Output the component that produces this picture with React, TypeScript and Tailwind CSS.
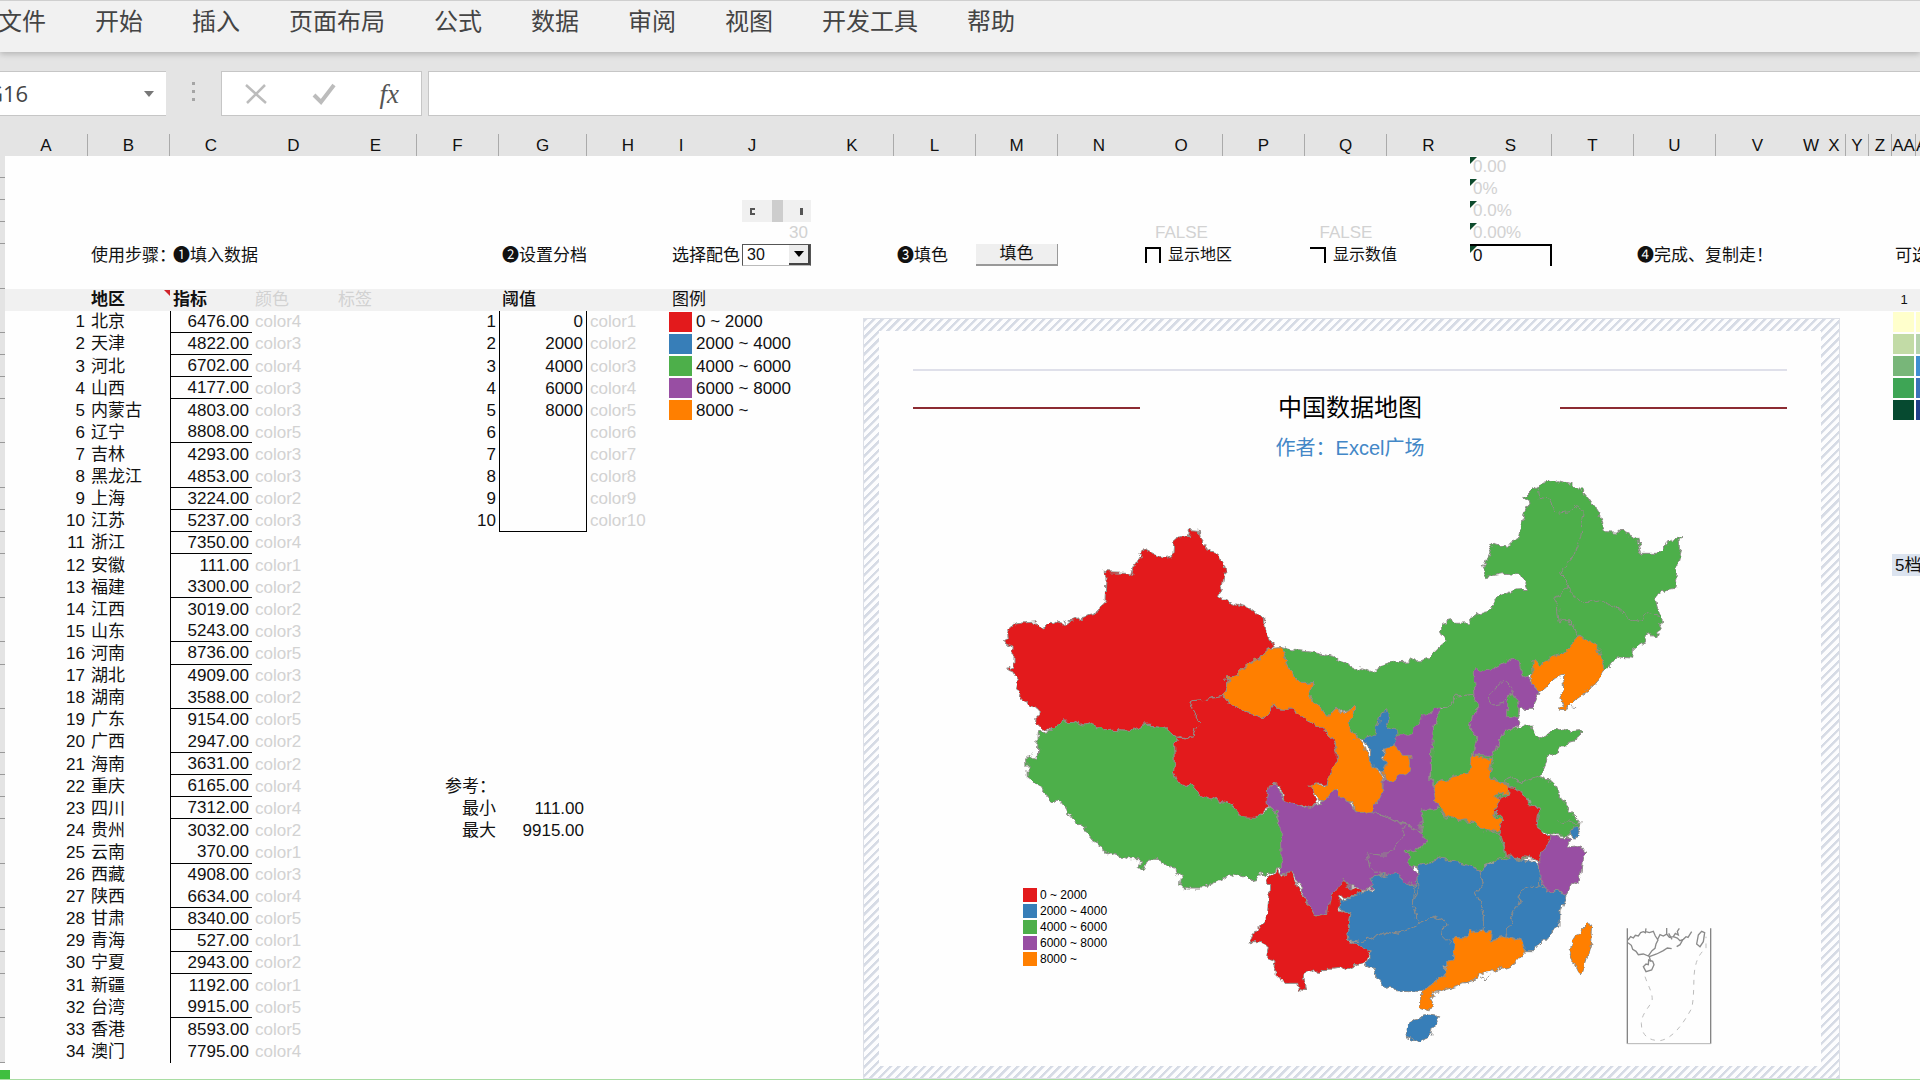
import type { ReactNode } from 'react'
import { clsx } from 'clsx'

type Region = [name: string, value: string, color: string]
type Cells = Record<string, ReactNode>

const MENU = ['文件', '开始', '插入', '页面布局', '公式', '数据', '审阅', '视图', '开发工具', '帮助']

// column letter, width, separator on the right of the header
const COLUMNS: [string, string, boolean][] = [
  ['A', 'w-[83px]', true],
  ['B', 'w-[82px]', true],
  ['C', 'w-[82px]', false],
  ['D', 'w-[83px]', false],
  ['E', 'w-[82px]', true],
  ['F', 'w-[82px]', true],
  ['G', 'w-[88px]', true],
  ['H', 'w-[82px]', false],
  ['I', 'w-[24px]', false],
  ['J', 'w-[118px]', false],
  ['K', 'w-[83px]', true],
  ['L', 'w-[82px]', true],
  ['M', 'w-[82px]', true],
  ['N', 'w-[82px]', false],
  ['O', 'w-[83px]', true],
  ['P', 'w-[82px]', true],
  ['Q', 'w-[82px]', true],
  ['R', 'w-[83px]', false],
  ['S', 'w-[82px]', true],
  ['T', 'w-[82px]', true],
  ['U', 'w-[82px]', true],
  ['V', 'w-[83px]', false],
  ['W', 'w-[24px]', false],
  ['X', 'w-[23px]', true],
  ['Y', 'w-[23px]', true],
  ['Z', 'w-[23px]', true],
  ['AA', 'w-[24px]', true],
  ['AB', '', false],
]

const REGIONS: Region[] = [
  ['北京', '6476.00', 'color4'],
  ['天津', '4822.00', 'color3'],
  ['河北', '6702.00', 'color4'],
  ['山西', '4177.00', 'color3'],
  ['内蒙古', '4803.00', 'color3'],
  ['辽宁', '8808.00', 'color5'],
  ['吉林', '4293.00', 'color3'],
  ['黑龙江', '4853.00', 'color3'],
  ['上海', '3224.00', 'color2'],
  ['江苏', '5237.00', 'color3'],
  ['浙江', '7350.00', 'color4'],
  ['安徽', '111.00', 'color1'],
  ['福建', '3300.00', 'color2'],
  ['江西', '3019.00', 'color2'],
  ['山东', '5243.00', 'color3'],
  ['河南', '8736.00', 'color5'],
  ['湖北', '4909.00', 'color3'],
  ['湖南', '3588.00', 'color2'],
  ['广东', '9154.00', 'color5'],
  ['广西', '2947.00', 'color2'],
  ['海南', '3631.00', 'color2'],
  ['重庆', '6165.00', 'color4'],
  ['四川', '7312.00', 'color4'],
  ['贵州', '3032.00', 'color2'],
  ['云南', '370.00', 'color1'],
  ['西藏', '4908.00', 'color3'],
  ['陕西', '6634.00', 'color4'],
  ['甘肃', '8340.00', 'color5'],
  ['青海', '527.00', 'color1'],
  ['宁夏', '2943.00', 'color2'],
  ['新疆', '1192.00', 'color1'],
  ['台湾', '9915.00', 'color5'],
  ['香港', '8593.00', 'color5'],
  ['澳门', '7795.00', 'color4'],
]

const THRESHOLDS = ['0', '2000', '4000', '6000', '8000']

const LEGEND = [
  { label: '0 ~ 2000', bg: 'bg-[#e31a1c]' },
  { label: '2000 ~ 4000', bg: 'bg-[#377eb8]' },
  { label: '4000 ~ 6000', bg: 'bg-[#4daf4a]' },
  { label: '6000 ~ 8000', bg: 'bg-[#984ea3]' },
  { label: '8000 ~', bg: 'bg-[#ff7f00]' },
]

const PALETTE_1 = ['bg-[#ffffcc]', 'bg-[#c2dba6]', 'bg-[#78b679]', 'bg-[#3ea555]', 'bg-[#064a30]']
const PALETTE_2 = ['bg-[#ffffcc]', 'bg-[#b5d3ae]', 'bg-[#3f8fd2]', 'bg-[#3b73b9]', 'bg-[#233f8c]']

// data rows drawn without a line below them
const UNRULED = [5, 7, 12, 14, 17, 19, 24, 26, 31, 33, 34]

const RED = '#e31a1c'
const BLUE = '#377eb8'
const GREEN = '#4daf4a'
const PURPLE = '#984ea3'
const ORANGE = '#ff7f00'

// plain areas below the provinces, so no white shows between two neighbours
const UNDERLAY = [
  { fill: GREEN, points: '1310,1000 1470,830 1560,850 1600,970 1690,1070 1685,1190 1500,1215 1320,1200' },
  { fill: PURPLE, points: '910,1100 1060,1010 1130,1050 1200,960 1340,1040 1300,1240 1180,1260 1000,1330' },
  { fill: BLUE, points: '1300,1240 1500,1220 1670,1230 1720,1300 1620,1425 1480,1405 1200,1480 1120,1360' },
]

const PROVINCES: { name: string; fill: string; points: string }[] = [
  {
    name: '内蒙古 黑龙江 吉林',
    fill: GREEN,
    points:
      '905,560 950,572 1010,578 1060,590 1080,608 1120,622 1165,635 1210,618 1250,605 1320,602 1350,592 1370,570 1400,545 1385,520 1385,490 1415,482 1430,490 1465,488 1485,462 1520,455 1540,430 1560,408 1605,390 1648,388 1640,365 1615,345 1575,340 1520,350 1508,335 1520,300 1540,250 1580,262 1595,245 1615,235 1620,200 1635,160 1650,130 1648,118 1628,112 1655,85 1690,70 1730,62 1770,70 1800,85 1825,115 1855,160 1875,215 1930,218 1970,238 1982,280 2030,280 2055,255 2108,225 2100,240 2105,262 2095,300 2088,388 2045,395 2025,415 2035,450 2045,485 2035,515 2030,528 2005,515 1995,545 1960,570 1958,595 1910,590 1880,630 1820,640 1700,640 1655,645 1560,670 1485,700 1430,705 1405,740 1370,745 1330,780 1295,825 1252,830 1200,840 1150,840 1135,835 1105,815 1100,790 1125,745 1060,752 1050,765 1035,765 1020,740 985,705 990,690 995,662 965,665 935,645 918,612',
  },
  {
    name: '新疆',
    fill: RED,
    points:
      '372,338 440,340 455,346 462,320 495,268 515,278 545,294 578,288 582,240 600,230 628,230 632,206 658,208 660,232 672,250 690,276 716,284 728,315 735,340 730,375 718,400 726,414 760,430 800,440 830,462 856,486 862,520 880,556 862,562 860,592 825,600 800,618 775,642 745,645 738,680 735,700 725,710 680,718 640,722 635,735 645,765 662,790 645,808 638,835 600,830 590,832 560,805 520,800 490,798 455,812 400,808 350,810 345,788 310,795 280,782 250,780 235,790 220,810 185,805 170,790 172,745 150,735 118,706 108,690 115,660 98,632 80,626 102,618 102,560 78,552 70,542 82,535 80,515 105,492 140,488 168,486 172,500 195,504 215,484 245,492 270,482 345,466 350,448 375,428 378,350',
  },
  {
    name: '西藏',
    fill: GREEN,
    points:
      '175,815 220,810 235,790 250,780 280,782 310,795 345,788 350,810 400,808 455,812 490,798 520,800 560,805 590,832 598,842 584,855 586,900 580,930 590,965 610,972 630,974 655,1000 700,1020 745,1028 775,1050 780,1070 825,1070 850,1060 862,1040 885,1052 895,1090 905,1110 905,1225 890,1228 860,1250 838,1244 830,1262 815,1265 800,1250 760,1238 725,1258 700,1270 675,1284 625,1284 602,1276 604,1250 590,1240 588,1222 560,1216 535,1202 510,1200 495,1210 485,1232 478,1220 482,1196 440,1196 400,1182 370,1172 365,1158 340,1145 315,1115 310,1092 290,1090 265,1060 250,1038 235,1020 215,1026 180,985 160,964 142,956 140,890 155,882 158,890 172,892',
  },
  {
    name: '青海',
    fill: RED,
    points:
      '640,722 680,718 725,710 745,722 770,740 800,760 850,772 870,762 880,735 905,750 940,750 985,782 1020,800 1060,835 1072,880 1072,910 1050,955 1035,975 1000,975 1002,1000 1012,1025 985,1050 965,1040 930,1030 912,1025 905,980 885,970 865,985 860,1035 845,1060 825,1072 782,1070 770,1045 745,1028 700,1020 655,1000 630,974 610,972 590,965 580,930 586,900 584,855 598,842 590,832 638,835 645,808 662,790 645,765 635,735',
  },
  {
    name: '甘肃',
    fill: ORANGE,
    points:
      '862,562 905,560 915,590 918,612 935,645 965,665 995,662 990,690 985,705 1020,740 1035,765 1050,765 1060,752 1090,755 1120,745 1128,750 1120,775 1105,792 1105,815 1135,835 1160,865 1170,910 1205,945 1208,1000 1190,1035 1175,1060 1125,1060 1118,1028 1080,1010 1070,990 1045,1010 1040,1028 1020,1020 995,985 990,975 1035,980 1042,955 1072,910 1072,880 1060,835 1020,800 985,782 940,750 905,750 880,735 870,762 850,772 800,760 770,740 745,722 725,710 735,700 738,680 745,645 775,642 800,618 825,600 860,592',
  },
  {
    name: '陕西',
    fill: PURPLE,
    points:
      '1370,745 1380,748 1365,800 1362,850 1355,880 1352,975 1370,1010 1372,1045 1325,1048 1335,1065 1320,1090 1320,1115 1280,1095 1220,1068 1175,1060 1190,1035 1208,1000 1210,955 1205,935 1240,858 1240,830 1252,825 1295,825 1305,800 1330,770',
  },
  {
    name: '甘肃东',
    fill: ORANGE,
    points:
      '1215,865 1230,858 1285,885 1290,910 1280,945 1255,945 1250,960 1230,962 1210,955 1208,935 1225,910 1210,885',
  },
  {
    name: '宁夏',
    fill: BLUE,
    points:
      '1150,840 1185,820 1195,790 1200,760 1225,752 1228,765 1215,800 1250,815 1252,830 1240,860 1210,868 1208,890 1225,908 1210,935 1195,932 1170,910 1172,870',
  },
  {
    name: '四川 重庆',
    fill: PURPLE,
    points:
      '865,975 895,972 908,1020 935,1030 980,1050 1010,1030 1040,1020 1060,985 1080,1005 1105,1018 1125,1055 1160,1060 1180,1058 1240,1080 1300,1105 1325,1115 1345,1140 1320,1165 1275,1175 1295,1215 1310,1245 1305,1280 1275,1260 1250,1240 1220,1245 1170,1255 1180,1280 1150,1295 1110,1280 1090,1255 1060,1310 1050,1355 1005,1368 985,1330 960,1275 935,1240 905,1245 900,1100 885,1055 858,1030',
  },
  {
    name: '辽宁',
    fill: ORANGE,
    points:
      '1655,600 1675,620 1700,600 1770,565 1795,540 1802,525 1825,540 1855,570 1880,630 1840,680 1815,700 1785,720 1760,745 1738,754 1740,740 1752,738 1740,712 1755,690 1750,650 1725,660 1705,680 1682,698 1648,665 1660,640',
  },
  {
    name: '山西',
    fill: GREEN,
    points:
      '1380,748 1405,740 1430,705 1485,700 1482,730 1495,750 1475,770 1470,795 1488,830 1472,900 1465,935 1420,950 1355,975 1355,880 1362,820 1370,780',
  },
  {
    name: '河北',
    fill: PURPLE,
    points:
      '1490,620 1505,640 1530,630 1580,600 1600,592 1620,610 1625,640 1648,648 1648,665 1680,698 1660,745 1625,745 1615,755 1610,775 1620,795 1585,812 1560,835 1535,890 1480,885 1488,830 1470,795 1475,770 1495,750 1482,730 1485,700 1480,655 1480,640',
  },
  { name: '天津', fill: GREEN, points: '1595,705 1610,720 1615,740 1610,772 1580,768 1580,735' },
  {
    name: '山东',
    fill: GREEN,
    points:
      '1560,835 1585,812 1620,800 1655,795 1665,820 1680,838 1700,825 1725,802 1765,815 1798,812 1792,840 1760,845 1735,870 1710,885 1685,945 1660,965 1630,970 1600,955 1570,968 1525,945 1540,905 1535,890',
  },
  {
    name: '江苏',
    fill: GREEN,
    points:
      '1570,968 1600,955 1630,970 1685,950 1725,970 1745,1020 1770,1055 1798,1080 1795,1100 1775,1110 1765,1130 1710,1125 1670,1100 1675,1065 1685,1045 1660,1040 1645,1015 1600,985',
  },
  {
    name: '河南',
    fill: ORANGE,
    points:
      '1355,975 1420,950 1465,935 1478,885 1535,900 1525,950 1570,970 1590,985 1580,1000 1550,1005 1555,1025 1540,1045 1550,1075 1565,1080 1560,1105 1530,1118 1485,1100 1480,1080 1420,1080 1390,1060 1370,1030',
  },
  {
    name: '湖北',
    fill: GREEN,
    points:
      '1325,1050 1375,1045 1395,1070 1440,1082 1485,1085 1495,1105 1540,1118 1555,1115 1565,1150 1575,1185 1550,1200 1500,1230 1460,1215 1420,1205 1375,1195 1340,1210 1315,1220 1295,1215 1275,1175 1320,1165 1345,1140 1320,1115 1330,1080',
  },
  {
    name: '安徽',
    fill: RED,
    points:
      '1580,980 1600,985 1625,1000 1645,1015 1650,1040 1685,1045 1672,1065 1668,1095 1685,1120 1712,1130 1695,1175 1680,1205 1650,1195 1580,1190 1565,1130 1552,1120 1568,1080 1540,1055 1555,1015 1585,1000',
  },
  {
    name: '浙江',
    fill: PURPLE,
    points:
      '1710,1130 1750,1135 1775,1135 1760,1162 1790,1158 1820,1170 1810,1200 1805,1250 1775,1270 1760,1300 1700,1290 1680,1250 1665,1210 1685,1190',
  },
  { name: '上海', fill: BLUE, points: '1780,1100 1792,1105 1802,1122 1780,1132 1770,1115' },
  {
    name: '云南',
    fill: RED,
    points:
      '895,1228 905,1250 930,1235 950,1270 985,1330 1005,1368 1045,1358 1055,1310 1090,1255 1110,1285 1145,1295 1130,1310 1080,1308 1075,1350 1110,1355 1105,1400 1110,1445 1170,1475 1160,1500 1110,1525 1040,1532 1000,1530 970,1545 980,1590 955,1585 950,1570 915,1570 880,1535 885,1500 860,1490 865,1460 850,1445 810,1445 825,1410 865,1365 872,1280 858,1265 870,1250',
  },
  {
    name: '贵州',
    fill: BLUE,
    points:
      '1075,1320 1120,1310 1180,1285 1170,1255 1220,1245 1250,1238 1275,1260 1305,1285 1300,1330 1315,1390 1260,1420 1220,1410 1190,1430 1140,1445 1110,1440 1105,1400 1110,1355 1075,1345',
  },
  {
    name: '广西',
    fill: BLUE,
    points:
      '1110,1445 1140,1445 1190,1430 1220,1410 1260,1420 1315,1390 1380,1370 1398,1390 1390,1430 1425,1430 1420,1490 1395,1520 1400,1540 1360,1570 1325,1595 1260,1590 1220,1585 1190,1555 1190,1530 1150,1520 1170,1490 1170,1475',
  },
  {
    name: '湖南',
    fill: BLUE,
    points:
      '1315,1220 1375,1195 1420,1205 1460,1215 1500,1230 1510,1265 1488,1305 1510,1360 1510,1410 1475,1412 1460,1430 1425,1430 1410,1450 1390,1430 1398,1390 1380,1370 1315,1390 1300,1330 1315,1290 1310,1245',
  },
  {
    name: '江西',
    fill: BLUE,
    points:
      '1500,1230 1550,1205 1600,1192 1660,1205 1678,1245 1675,1270 1630,1290 1610,1340 1590,1380 1580,1430 1530,1440 1510,1410 1510,1360 1488,1305 1510,1265',
  },
  {
    name: '福建',
    fill: BLUE,
    points:
      '1675,1270 1700,1290 1760,1300 1740,1350 1740,1400 1700,1430 1660,1475 1635,1475 1625,1440 1580,1430 1590,1380 1610,1340 1630,1290',
  },
  {
    name: '广东',
    fill: ORANGE,
    points:
      '1425,1430 1460,1430 1475,1410 1535,1415 1530,1440 1580,1430 1625,1440 1635,1480 1610,1510 1540,1535 1510,1540 1495,1535 1485,1560 1400,1585 1360,1600 1350,1615 1360,1645 1345,1652 1325,1645 1325,1595 1360,1570 1400,1540 1400,1500 1420,1490',
  },
  { name: '海南', fill: BLUE, points: '1275,1700 1305,1675 1350,1665 1382,1670 1360,1700 1355,1725 1320,1748 1280,1735' },
  { name: '台湾', fill: ORANGE, points: '1805,1405 1820,1390 1838,1395 1835,1440 1820,1500 1805,1545 1790,1530 1770,1490 1780,1445' },
]

const INNER_BORDERS = [
  '1675,80 1680,115 1710,122 1730,160 1770,155 1790,138 1815,160 1802,230 1780,290 1740,345 1765,370 1750,400 1720,415 1735,440 1740,485 1770,485 1795,528',
  '1765,375 1780,410 1820,425 1860,420 1900,440 1930,465 1965,485 2000,460 2035,470',
  '1530,705 1555,675 1570,662 1600,690 1595,710 1570,730 1540,735 1530,705',
  '1240,1080 1280,1100 1260,1140 1225,1185 1200,1185 1160,1180 1170,1220 1200,1250',
  '1740,1090 1765,1082 1790,1092 1797,1110',
  '1500,1552 1515,1548 1522,1560 1530,1548',
  '1775,738 1785,740',
]

function ChinaMap() {
  return (
    <svg viewBox="0 0 2220 1800" className="h-[600px] w-[740px]" role="img" aria-label="中国数据地图">
      <defs>
        <filter id="coast" x="0" y="0" width="100%" height="100%" colorInterpolationFilters="sRGB">
          <feTurbulence type="fractalNoise" baseFrequency="0.035" numOctaves={3} seed={4} />
          <feDisplacementMap in="SourceGraphic" scale={28} xChannelSelector="R" yChannelSelector="G" />
        </filter>
      </defs>
      <g filter="url(#coast)">
        {UNDERLAY.map((area) => (
          <polygon key={area.points} points={area.points} fill={area.fill} />
        ))}
        <g stroke="#8f8c88" strokeWidth={3} strokeLinejoin="round">
          {PROVINCES.map((p) => (
            <polygon key={p.name} points={p.points} fill={p.fill} />
          ))}
          {INNER_BORDERS.map((points) => (
            <polyline key={points} points={points} fill="none" />
          ))}
        </g>
      </g>
      {/* 南海诸岛 */}
      <g fill="none" stroke="#8a8a8a" strokeWidth={4}>
        <path d="M1942 1405V1751M2192 1405V1751" stroke="#858585" />
        <path d="M1942 1751H2192" stroke="#b5b5b5" strokeWidth={3} />
        <path d="M1944 1440L1952 1430 1960 1434 1966 1426 1975 1428 1982 1418 1990 1415 1996 1418 1998 1405M1998 1415L2008 1418 2020 1414 2026 1428 2034 1440 2028 1452 2025 1465 2016 1472 2005 1488 1990 1482 1975 1484 1968 1474 1958 1468 1954 1456 1944 1448M2032 1440L2040 1424 2050 1428 2060 1422 2060 1404M2060 1422L2068 1432 2080 1430 2086 1420 2095 1425 2092 1414 2098 1405M2066 1420L2076 1438M2080 1430L2092 1434 2100 1442 2110 1438 2118 1430 2124 1432 2135 1415M2108 1440L2100 1454 2090 1460M2075 1466L2062 1464 2050 1472 2030 1482 2008 1490 2012 1505" />
        <path d="M1990 1520L1998 1512 2005 1514 2006 1500 2018 1504 2022 1514 2015 1530 1998 1535Z" />
        <path d="M2155 1425L2165 1414 2174 1418 2170 1445 2160 1460 2150 1452Z" />
        <path
          d="M1995 1550C2005 1580 2020 1600 2016 1625C2000 1650 1985 1665 1984 1690C1984 1725 2005 1742 2040 1742C2080 1735 2110 1690 2135 1645C2145 1600 2138 1550 2146 1520C2152 1490 2165 1475 2178 1465V1430"
          stroke="#bdbdbd"
          strokeWidth={3}
          strokeDasharray="14 16"
        />
      </g>
    </svg>
  )
}

function MapChart() {
  return (
    <section className="absolute top-[162px] left-[863px] h-[761px] w-[977px] border border-[#dde0e7] bg-[repeating-linear-gradient(135deg,#d6dbe5_0px,#d6dbe5_2px,#fdfdfe_3px,#fdfdfe_6px)] py-[12px] pr-[18px] pl-[15px]">
      <div className="flex h-full flex-col items-center bg-[#fefefe] px-[34px] pt-[38px]">
        <div className="h-[2px] w-full shrink-0 bg-[#dfe0ea]" />
        <div className="mt-[19px] flex h-9 w-full shrink-0 items-center justify-between">
          <div className="h-[2px] w-[227px] bg-[#8c2b32]" />
          <h1 className="text-[24px] leading-9 text-black">中国数据地图</h1>
          <div className="h-[2px] w-[227px] bg-[#8c2b32]" />
        </div>
        <p className="mt-2 h-[26px] text-[20px] leading-7 text-[#4387c7]">作者：Excel广场</p>
        <div className="relative shrink-0">
          <ChinaMap />
          <ul className="absolute top-[428px] left-[43px] flex flex-col gap-[2px] text-[12px] leading-[14px]">
            {LEGEND.map((l) => (
              <li key={l.label} className="flex items-center gap-[3px] whitespace-nowrap">
                <span className={clsx('size-[14px]', l.bg)} />
                {l.label}
              </li>
            ))}
          </ul>
        </div>
      </div>
    </section>
  )
}

function Swatch({ bg }: { bg: string }) {
  return <div className={clsx('h-5 w-full', bg)} />
}

function Muted({ children }: { children: ReactNode }) {
  return <span className="text-[#d2d2d2]">{children}</span>
}

function TextFormat({ children }: { children: ReactNode }) {
  return (
    <div className="relative pl-[3px]">
      <span className="absolute top-0 left-0 border-t-[7px] border-r-[7px] border-t-[#0d4a2c] border-r-transparent" />
      {children}
    </div>
  )
}

function ShowOption({ id, label, open }: { id: string; label: string; open?: boolean }) {
  return (
    <div className="flex items-center gap-[7px] pl-[5px]">
      <input
        id={id}
        type="checkbox"
        className={clsx('size-4 shrink-0 appearance-none border-t-2 border-r-2 border-black', !open && 'border-l-2')}
      />
      <label htmlFor={id} className="text-[16px]">
        {label}
      </label>
    </div>
  )
}

function PaletteScroll() {
  return (
    <div className="ml-auto flex h-[22px] w-[69px] items-center justify-between bg-[#f0f0f0] px-2">
      <button aria-label="上一个" className="h-[7px] w-[5px] border-2 border-r-0 border-[#555]" />
      <span className="h-full w-[11px] bg-[#cdcdcd]" />
      <button aria-label="下一个" className="h-[7px] w-[3px] bg-[#555]" />
    </div>
  )
}

function PaletteSelect() {
  return (
    <div className="ml-auto flex h-[22px] w-[69px] border border-[#555] border-b-[#bbb] bg-white">
      <select aria-label="选择配色" className="min-w-0 flex-1 appearance-none pl-1 text-[16px] leading-5">
        <option>30</option>
      </select>
      <span className="flex w-[21px] items-center justify-center border-r-2 border-b-2 border-[#444] bg-[#ececec]">
        <span className="border-x-[5px] border-t-[6px] border-x-transparent border-t-black" />
      </span>
    </div>
  )
}

const TOP_ROWS: Cells[] = [
  { S: <TextFormat><Muted>0.00</Muted></TextFormat> },
  { S: <TextFormat><Muted>0%</Muted></TextFormat> },
  { J: <PaletteScroll />, S: <TextFormat><Muted>0.0%</Muted></TextFormat> },
  {
    J: <div className="pr-[3px] text-right"><Muted>30</Muted></div>,
    O: <div className="text-center"><Muted>FALSE</Muted></div>,
    Q: <div className="text-center"><Muted>FALSE</Muted></div>,
    S: <TextFormat><Muted>0.00%</Muted></TextFormat>,
  },
  {
    B: '使用步骤：',
    C: '❶填入数据',
    G: '❷设置分档',
    I: '选择配色',
    J: <PaletteSelect />,
    L: '❸填色',
    M: (
      <button className="h-[22px] w-full border-r border-b-2 border-[#999] bg-[#efefef] leading-[18px]">填色</button>
    ),
    O: <ShowOption id="show-region" label="显示地区" />,
    Q: <ShowOption id="show-value" label="显示数值" open />,
    S: <div className="h-[22px] border-t-2 border-r-2 border-black"><TextFormat>0</TextFormat></div>,
    U: '❹完成、复制走！',
    AA: '可选',
  },
  {},
  {
    B: (
      <div className="relative font-bold">
        地区
        <span className="absolute top-0 right-0 border-t-[6px] border-l-[6px] border-t-[#d0242b] border-l-transparent" />
      </div>
    ),
    C: <b>指标</b>,
    D: <Muted>颜色</Muted>,
    E: <Muted>标签</Muted>,
    G: <span className="font-medium">阈值</span>,
    I: '图例',
    AA: <div className="text-center text-[13px]">1</div>,
  },
]

const DATA_ROWS: Cells[] = REGIONS.map(([name, value, color], i) => {
  const cells: Cells = { A: i + 1, B: name, C: value, D: <Muted>{color}</Muted> }
  if (i < 10) {
    cells.F = i + 1
    cells.G = THRESHOLDS[i]
    cells.H = <Muted>color{i + 1}</Muted>
  }
  if (i < 5) {
    cells.I = <Swatch bg={LEGEND[i].bg} />
    cells.J = LEGEND[i].label
    cells.AA = <Swatch bg={PALETTE_1[i]} />
    cells.AB = <Swatch bg={PALETTE_2[i]} />
  }
  if (i === 11) cells.AA = '5档'
  if (i === 21) cells.F = '参考：'
  if (i === 22) {
    cells.F = '最小'
    cells.G = '111.00'
  }
  if (i === 23) {
    cells.F = '最大'
    cells.G = '9915.00'
  }
  return cells
})

function topCellClass(col: string) {
  if (['J', 'M', 'O', 'Q', 'S'].includes(col)) return 'p-0'
  return col === 'B' ? 'pt-px pl-[3px]' : 'px-[3px] pt-px'
}

function dataCellClass(col: string, n: number) {
  return clsx(
    ['A', 'C', 'F', 'G'].includes(col) && 'text-right',
    col === 'I' ? 'pr-px' : col === 'AA' && n <= 5 ? 'pr-[2px] pl-px' : col === 'AB' ? 'p-0' : 'px-[3px] pt-px',
    col === 'C' && 'border-l border-l-black',
    col === 'C' && !UNRULED.includes(n) && 'border-b border-b-black',
    col === 'G' && n <= 10 && 'border-x border-x-black',
    col === 'G' && n === 10 && 'border-b border-b-black',
    (col === 'AA' || col === 'AB') && n === 12 && 'bg-[#dbe3ef]',
  )
}

function Gutter({ ruled }: { ruled: boolean }) {
  return <td className={clsx('bg-[#e4e4e4] p-0', ruled && 'border-b border-b-[#999]')} />
}

function Sheet() {
  return (
    <main className="relative flex-1 overflow-hidden pb-[17px]">
      <table className="h-[929px] w-full table-fixed border-separate border-spacing-0 text-[17px] leading-5 whitespace-nowrap text-[#111]">
        <colgroup>
          <col className="w-[5px]" />
          {COLUMNS.map(([letter, width]) => (
            <col key={letter} className={width} />
          ))}
        </colgroup>
        <thead>
          <tr className="h-[22px] bg-[#e4e4e4]">
            <td className="p-0" />
            {COLUMNS.map(([letter, , sep]) => (
              <th
                key={letter}
                scope="col"
                className={clsx('p-0 pt-px font-normal', sep && 'border-r border-r-[#aaa]')}
              >
                <div className={clsx('flex', letter !== 'AB' && 'justify-center')}>{letter}</div>
              </th>
            ))}
          </tr>
        </thead>
        <tbody>
          {TOP_ROWS.map((cells, i) => (
            <tr key={i} className={clsx('h-[22px]', i === 6 && 'bg-[#f1f1f1]')}>
              <Gutter ruled={i < 4 || i === 5} />
              {COLUMNS.map(([letter]) => (
                <td key={letter} className={topCellClass(letter)}>
                  {cells[letter]}
                </td>
              ))}
            </tr>
          ))}
          {DATA_ROWS.map((cells, i) => (
            <tr key={i} className="h-[22px]">
              <Gutter ruled={!UNRULED.includes(i + 1) || i === 33} />
              {COLUMNS.map(([letter]) => (
                <td key={letter} className={dataCellClass(letter, i + 1)}>
                  {cells[letter]}
                </td>
              ))}
            </tr>
          ))}
        </tbody>
      </table>
      <div className="absolute top-[22px] left-0">
        <MapChart />
      </div>
      {/* playback progress, on top of the sheet */}
      <div className="absolute inset-x-0 bottom-0 border-b border-[#a9dda3]">
        <div className="h-[9px] w-[10px] bg-[#3fbf3f]" />
      </div>
    </main>
  )
}

function FormulaBar() {
  return (
    <div className="flex h-[72px] items-start bg-[#e4e4e4] pt-[9px]">
      <div className="flex h-[45px] w-[166px] items-center border-y border-[#c6c6c6] bg-white pr-3">
        <input
          aria-label="名称框"
          defaultValue="G16"
          className="-ml-[13px] min-w-0 flex-1 font-['Open_Sans','Noto_Sans_CJK_SC',sans-serif] text-[22px] text-[#444]"
        />
        <span className="border-x-[5px] border-t-[6px] border-x-transparent border-t-[#777]" />
      </div>
      <div className="flex h-[40px] w-[55px] flex-col items-center justify-center gap-[5px]">
        <span className="size-[3px] bg-[#a5a5a5]" />
        <span className="size-[3px] bg-[#a5a5a5]" />
        <span className="size-[3px] bg-[#a5a5a5]" />
      </div>
      <div className="flex h-[45px] w-[201px] items-center justify-around border border-[#c6c6c6] bg-white">
        <button aria-label="取消">
          <svg viewBox="0 0 24 24" className="size-6" fill="none" stroke="#bcbcbc" strokeWidth={2.5}>
            <path d="M2 3L22 21M21 3L3 21" />
          </svg>
        </button>
        <button aria-label="输入">
          <svg viewBox="0 0 24 24" className="size-6" fill="none" stroke="#bcbcbc" strokeWidth={4}>
            <path d="M2 13L9 20L22 3" />
          </svg>
        </button>
        <button
          aria-label="插入函数"
          className="font-['Liberation_Serif','Noto_Sans_CJK_SC',serif] text-[27px] leading-8 text-[#555] italic"
        >
          fx
        </button>
      </div>
      <input aria-label="编辑栏" className="ml-[6px] h-[45px] min-w-0 flex-1 border border-r-0 border-[#c6c6c6] bg-white" />
    </div>
  )
}

export default function App() {
  return (
    <div className="flex min-h-screen flex-col overflow-hidden bg-[#fefefe] font-['Liberation_Sans','Noto_Sans_CJK_SC',sans-serif]">
      <nav className="z-10 flex h-[52px] gap-[49px] border-t border-[#cfcfcf] bg-[#f1f1f1] pb-[10px] whitespace-nowrap shadow-[0_2px_6px_rgba(0,0,0,0.22)]">
        {MENU.map((item) => (
          <button key={item} className="text-[24px] leading-8 text-[#444] first:-ml-[2px]">
            {item}
          </button>
        ))}
      </nav>
      <div className="h-[10px] bg-[#e4e4e4]" />
      <FormulaBar />
      <Sheet />
    </div>
  )
}
